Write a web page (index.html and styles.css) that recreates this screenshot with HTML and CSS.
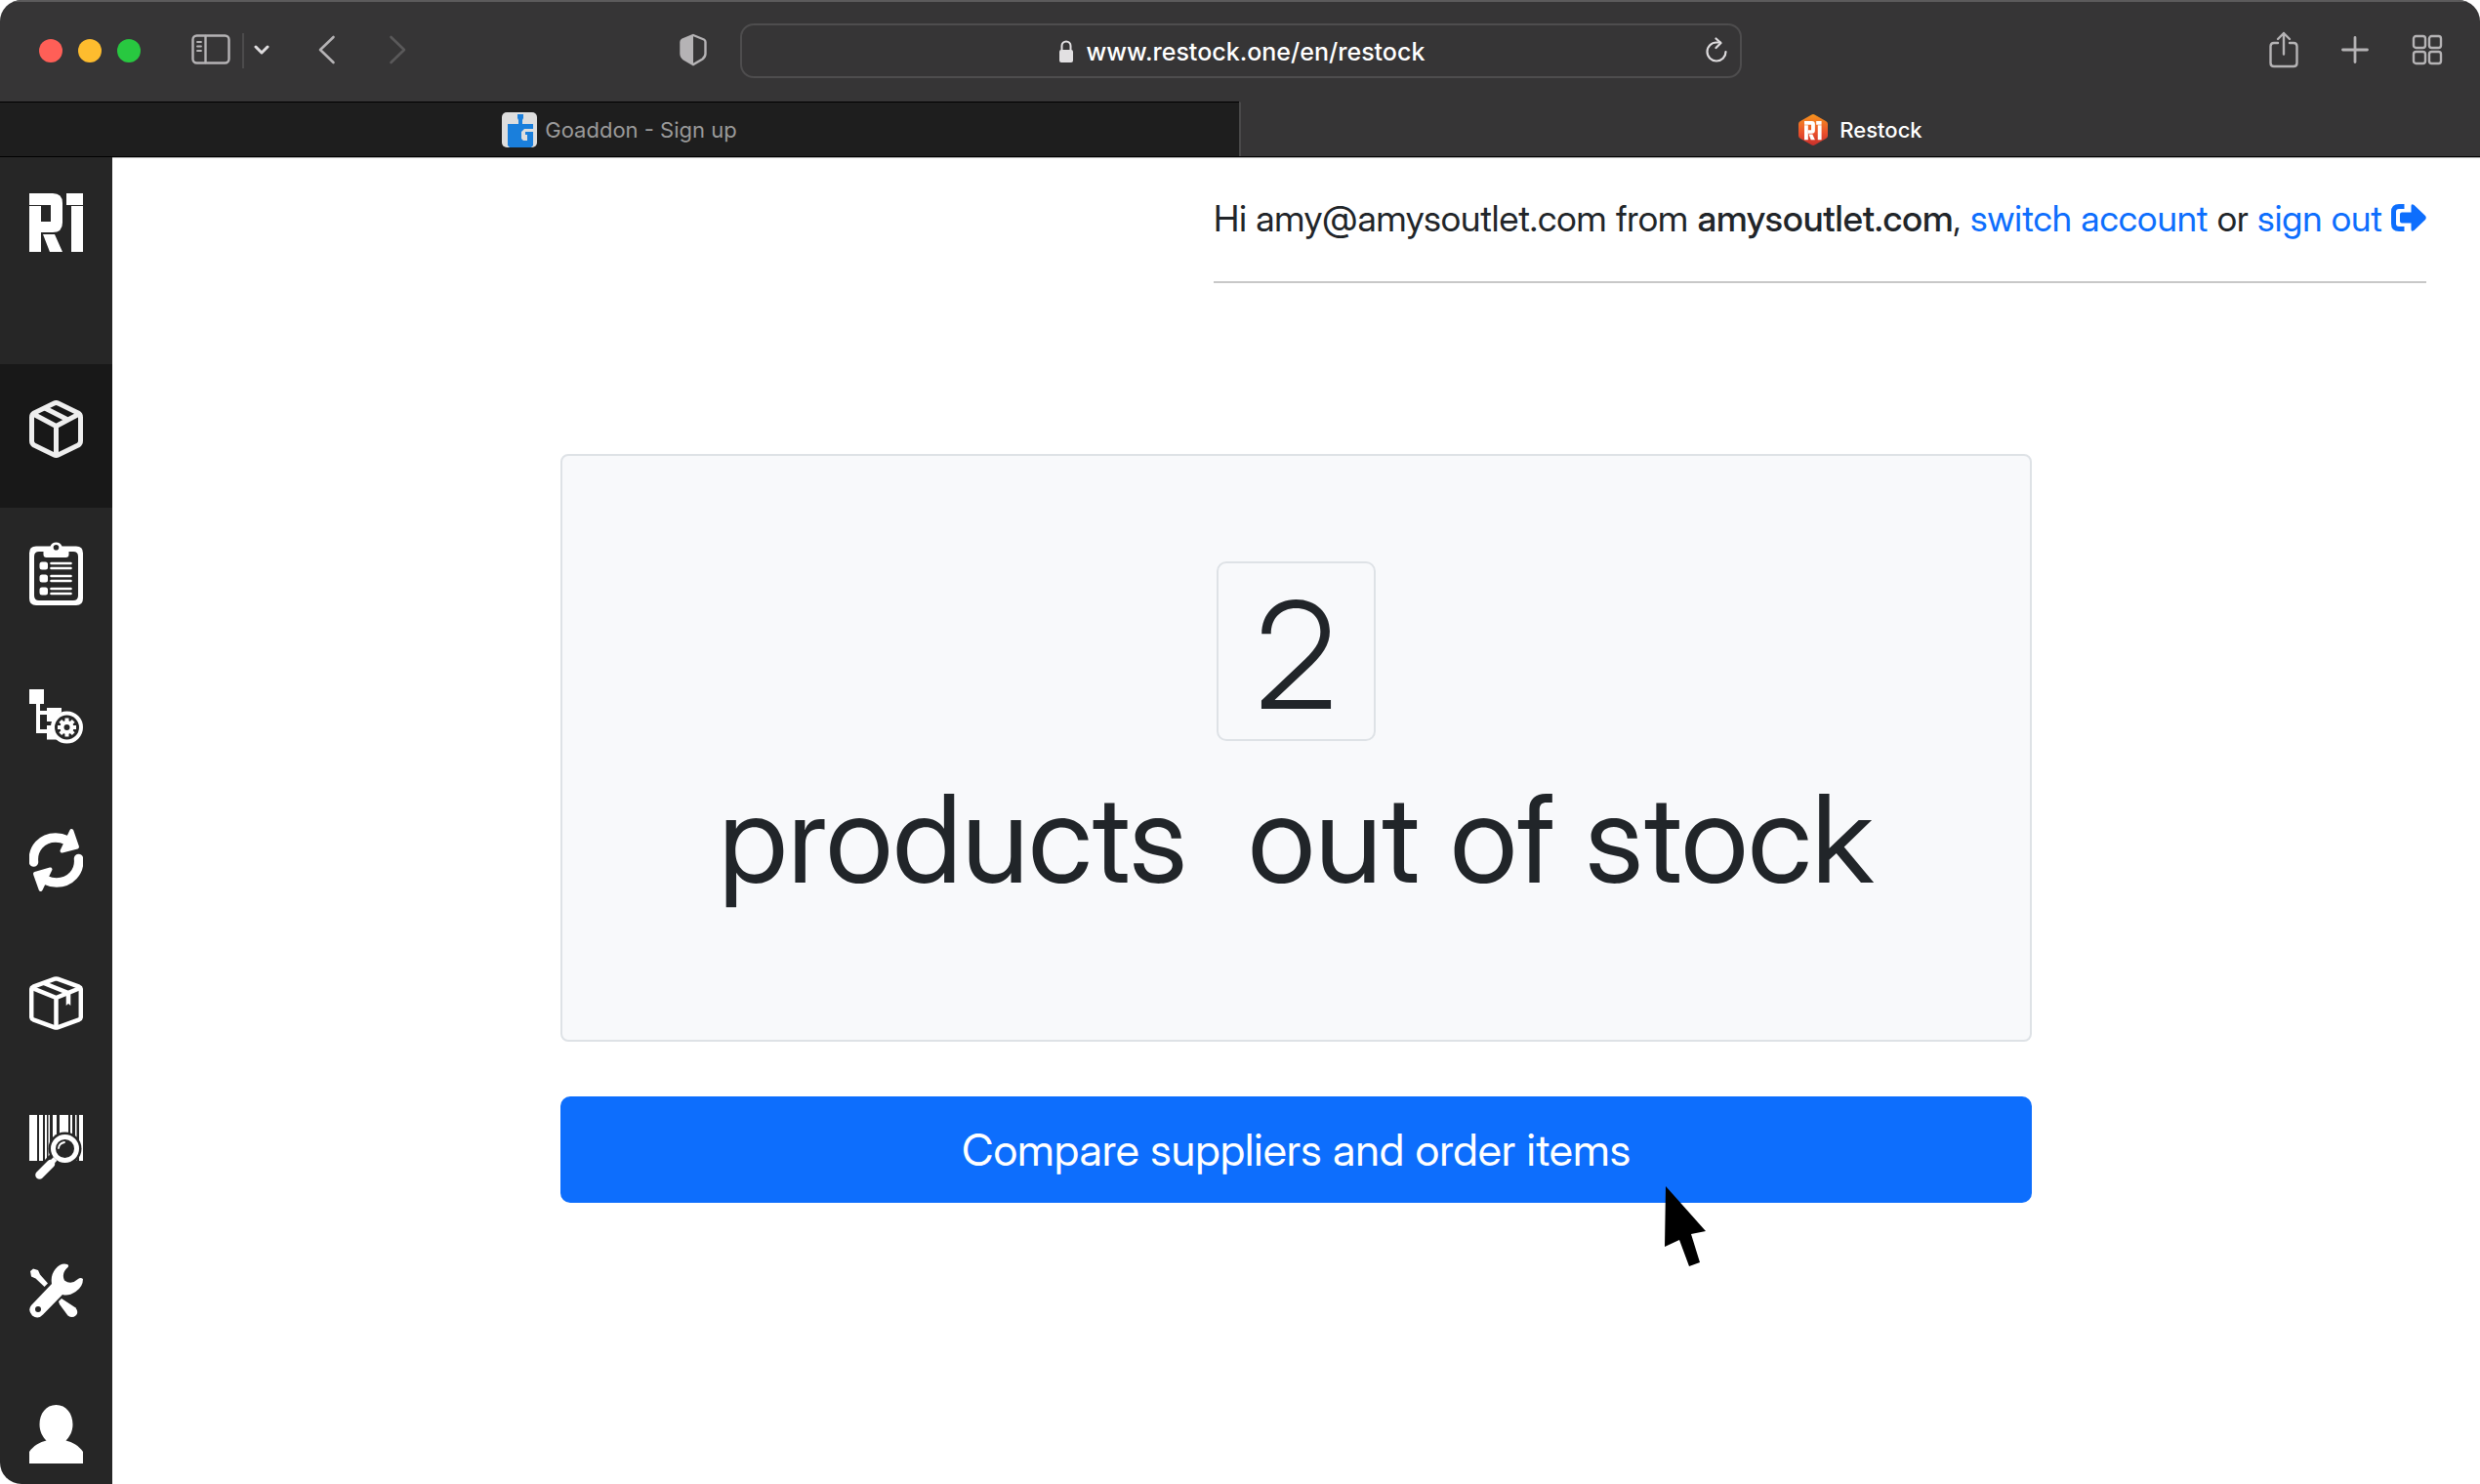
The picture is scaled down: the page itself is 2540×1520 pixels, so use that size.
FILE: index.html
```
<!DOCTYPE html>
<html lang="en">
<head>
    <meta charset="UTF-8">
    <meta name="viewport" content="width=device-width, initial-scale=1.0">
    <title>Restock</title>
    <link rel="stylesheet" href="styles.css">
</head>
<body>

    <div class="window">

        <!-- Browser toolbar -->
        <header class="toolbar">
            <div class="toolbar-side">
                <div class="lights">
                    <span class="light red"></span>
                    <span class="light yellow"></span>
                    <span class="light green"></span>
                </div>
                <button class="tool sidebar-toggle" aria-label="Show sidebar">
                    <svg width="40" height="32" viewBox="0 0 40 32" fill="none" stroke="#b5b3b5" stroke-width="2.4" stroke-linecap="round">
                        <rect x="1.5" y="1.5" width="37" height="28" rx="4"/>
                        <path d="M14.5 2v27"/>
                        <path d="M6 8h4M6 12.500h4M6 17h4" stroke-width="1.8"/>
                    </svg>
                </button>
                <span class="separator"></span>
                <button class="tool menu-toggle" aria-label="Tab groups">
                    <svg width="16" height="12" viewBox="0 0 16 12" fill="none" stroke="#dedcde" stroke-width="3" stroke-linecap="round" stroke-linejoin="round"><path d="M2 3l6 6 6-6"/></svg>
                </button>
                <button class="tool back" aria-label="Back">
                    <svg width="18" height="30" viewBox="0 0 18 30" fill="none" stroke="#b5b3b5" stroke-width="2.600" stroke-linecap="round" stroke-linejoin="round"><path d="M15.500 2L2 15l13.500 13"/></svg>
                </button>
                <button class="tool" aria-label="Forward" disabled>
                    <svg width="18" height="30" viewBox="0 0 18 30" fill="none" stroke="#5a595a" stroke-width="2.600" stroke-linecap="round" stroke-linejoin="round"><path d="M2.500 2L16 15 2.500 28"/></svg>
                </button>
                <button class="tool shield" aria-label="Privacy report">
                    <svg width="28" height="34" viewBox="0 0 28 34"><path d="M14 2L25 6.500Q26.500 7.200 26.500 9v12q0 3-3 5.500L14 32l-9.500-5.500q-3-2.500-3-5.500V9q0-1.800 1.500-2.500z" fill="none" stroke="#b5b3b5" stroke-width="2.400"/><path d="M14 2v30l-9.500-5.500q-3-2.500-3-5.500V9q0-1.800 1.500-2.500z" fill="#b5b3b5"/></svg>
                </button>
            </div>

            <div class="address">
                <a class="url" href="#">
                    <svg width="18" height="24" viewBox="0 0 18 24"><rect x="2" y="10" width="14" height="13" rx="2" fill="#e2e0e2"/><path d="M4.500 11V6a4.500 4.500 0 0 1 9 0v5" fill="none" stroke="#e2e0e2" stroke-width="2"/></svg>
                    www.restock.one/en/restock
                </a>
                <button class="tool reload" aria-label="Reload">
                    <svg width="24" height="26" viewBox="0 0 24 26" fill="none" stroke="#dddbdd" stroke-width="2.200" stroke-linecap="round" stroke-linejoin="round"><path d="M21.500 15A9.500 9.500 0 1 1 12 5.500h4"/><path d="M11.500 1.500L16.500 6 11.500 11"/></svg>
                </button>
            </div>

            <div class="toolbar-side right">
                <button class="tool" aria-label="Share">
                    <svg width="30" height="38" viewBox="0 0 30 38" fill="none" stroke="#b5b3b5" stroke-width="2.400" stroke-linecap="round" stroke-linejoin="round"><path d="M9 12H5q-3.500 0-3.500 3.500v17Q1.500 36 5 36h20q3.500 0 3.500-3.500v-17Q28.500 12 25 12h-4"/><path d="M15 23.500V2M9 8l6-6 6 6"/></svg>
                </button>
                <button class="tool" aria-label="New tab">
                    <svg width="28" height="28" viewBox="0 0 28 28" fill="none" stroke="#b5b3b5" stroke-width="2.800" stroke-linecap="round"><path d="M14 1.500v25M1.500 14h25"/></svg>
                </button>
                <button class="tool" aria-label="Tab overview">
                    <svg width="32" height="32" viewBox="0 0 32 32" fill="none" stroke="#b5b3b5" stroke-width="2.400"><rect x="2" y="2" width="12" height="12" rx="2.500"/><rect x="18" y="2" width="12" height="12" rx="2.500"/><rect x="2" y="18" width="12" height="12" rx="2.500"/><rect x="18" y="18" width="12" height="12" rx="2.500"/></svg>
                </button>
            </div>
        </header>

        <nav class="tabs">
            <a class="tab" href="#">
                <svg width="36" height="36" viewBox="0 0 36 36"><rect width="36" height="36" rx="5" fill="#dedede"/><path d="M16 2h6v4l-1 2v4h11v5h-9l-3 3v7l2 2h4v-6h-2v-3h8v14l-2 2H8l-2-2V12h11V8l-1-2z" fill="#1a7fdc"/></svg>
                Goaddon - Sign up
            </a>
            <a class="tab active" href="#">
                <svg width="30" height="32" viewBox="0 0 30 32">
                    <defs><linearGradient id="hex" x1="0" y1="0" x2="0" y2="1"><stop offset="0" stop-color="#f7941d"/><stop offset="0.600" stop-color="#ea4f2c"/><stop offset="1" stop-color="#c62f2b"/></linearGradient></defs>
                    <path d="M13 .7q2-1.200 4 0L28 7q2 1 2 3v12q0 2-2 3l-11 6.300q-2 1.200-4 0L2 25q-2-1-2-3V10q0-2 2-3z" fill="url(#hex)"/>
                    <g transform="translate(6 7) scale(0.320)" fill="#fff"><use href="#mark"/></g>
                </svg>
                Restock
            </a>
        </nav>

        <div class="page">

            <!-- Left menu -->
            <nav class="sidebar">
                <a class="brand" href="#" aria-label="Restock home">
                    <svg width="55" height="60" viewBox="0 0 55 60" fill="#fff">
                        <g id="mark">
                            <path d="M0 0h24q10 0 10 10v20q0 10-10 10H12V29h10V12H0z"/>
                            <path d="M0 13h12v47H0zM14 42h12l8 18H21z"/>
                            <path d="M38 0h17v12H38zM43 13h12v47H43z"/>
                        </g>
                    </svg>
                </a>
                <a class="item active" href="#" aria-label="Restock">
                    <svg width="55" height="59" viewBox="0 0 55 59" fill="none" stroke="#eee" stroke-width="5" stroke-linejoin="round">
                        <path d="M25 3.200q2.500-1.200 5 0L50 13q2.500 1.500 2.500 4.500v24q0 3-2.500 4.500L30 55.800q-2.500 1.200-5 0L5 46q-2.500-1.500-2.500-4.500v-24Q2.500 14.500 5 13z"/>
                        <path d="M4 14l23.500 12.500L51 14M27.500 27v29M16 8l23.500 12"/>
                    </svg>
                </a>
                <a class="item" href="#" aria-label="Orders">
                    <svg width="55" height="66" viewBox="0 0 55 66" fill="#fff">
                        <path fill-rule="evenodd" d="M7 5.500h14.500a6.500 6.500 0 0 1 12 0H48q7 0 7 7V59q0 7-7 7H7q-7 0-7-7V12.500q0-7 7-7zM14.500 11H10q-5 0-5 5v40q0 5 5 5h35q5 0 5-5V16q0-5-5-5h-4.500v3q0 3-3 3h-20q-3 0-3-3zM27.500 4a2.800 2.800 0 1 0 0 5.600 2.800 2.800 0 0 0 0-5.600z"/>
                        <rect x="10.500" y="21.500" width="8.500" height="8" rx="2.500"/><rect x="10.500" y="34.500" width="8.500" height="8" rx="2.500"/><rect x="10.500" y="47.500" width="8.500" height="8" rx="2.500"/>
                        <path d="M22.500 23h20M22.500 28h20M22.500 36h20M22.500 41h20M22.500 49h20M22.500 54h20" stroke="#fff" stroke-width="2.600" stroke-linecap="round"/>
                    </svg>
                </a>
                <a class="item" href="#" aria-label="Rules">
                    <svg width="55" height="56" viewBox="0 0 55 56" fill="#fff">
                        <path d="M0 0h15v15h-4v7h7v-3h15v4.500a17 17 0 0 0-8 9.500h-7v-7h-7v15h7v-4h6a17 17 0 0 0 7 14.500H18V45H7V15H0z"/>
                        <circle cx="38.500" cy="39" r="14.500" fill="#262626" stroke="#fff" stroke-width="4"/>
                        <circle cx="38.500" cy="39" r="5" fill="none" stroke="#fff" stroke-width="4"/>
                        <path d="M38.500 29.500v4M38.500 44.500v4M29 39h4M44 39h4M31.800 32.300l2.800 2.800M42.400 42.900l2.800 2.800M31.800 45.700l2.800-2.800M42.400 35.100l2.800-2.800" stroke="#fff" stroke-width="4"/>
                    </svg>
                </a>
                <a class="item" href="#" aria-label="Sync">
                    <svg width="55" height="66" viewBox="0 0 55 66" fill="none" stroke="#fff" stroke-linecap="round" stroke-linejoin="round">
                        <path d="M4.500 35C3 21 13 10 27 10q6 0 11 2.500M50.500 31.500C52 45 42 56 28 56q-6 0-11-2.500" stroke-width="9.500"/>
                        <path d="M43.300 3l5.700 16.500-15.500 4zM11.700 63L6 47l15.500-4.500z" fill="#fff" stroke-width="4"/>
                    </svg>
                </a>
                <a class="item" href="#" aria-label="Products">
                    <svg width="55" height="55" viewBox="0 0 55 55" fill="none" stroke="#fff" stroke-width="4.500" stroke-linejoin="round">
                        <path d="M26 2.700q1.500-.5 3 0l22 8q1.800.8 1.800 2.800v28q0 2-1.800 2.800l-22 8q-1.500.5-3 0l-22-8Q2.200 43.500 2.200 41.500v-28q0-2 1.800-2.800z"/>
                        <path d="M3 12l24.500 10L52 12M27.500 22v30M15 7l25 10"/>
                        <path d="M37.700 17.500h4.600V30l-2.300-2-2.300 2z" fill="#fff" stroke="none"/>
                    </svg>
                </a>
                <a class="item" href="#" aria-label="Barcode search">
                    <svg width="55" height="66" viewBox="0 0 55 66" fill="#fff">
                        <path d="M0 0h8v47H0zM10 0h4v47h-4zM16 0h2v47h-2zM19.500 0h1.500v47h-1.500zM24 0h4v47h-4zM31 0h9v47h-9zM42 0h2v47h-2zM47 0h1.500v47H47zM51 0h4v47h-4z"/>
                        <circle cx="36.500" cy="34.500" r="17" fill="#262626"/>
                        <path d="M25 45L10.500 61" stroke="#262626" stroke-width="12"/>
                        <circle cx="36.500" cy="34.500" r="12" fill="none" stroke="#fff" stroke-width="5"/>
                        <path d="M30 34q.5-5 6-6" fill="none" stroke="#fff" stroke-width="1.800" stroke-linecap="round"/>
                        <path d="M22 50L10.500 61.500" stroke="#fff" stroke-width="8.500" stroke-linecap="round"/>
                        <path d="M26.500 45L21 51" stroke="#fff" stroke-width="5"/>
                    </svg>
                </a>
                <a class="item" href="#" aria-label="Tools">
                    <svg width="55" height="56" viewBox="0 0 55 56" fill="#fff">
                        <path d="M1 8l3-2.500 5 1.500 2 4.500 8 9-3.500 3.500-9-8.500-4.500-2z"/>
                        <path d="M33 36l14.500 9.500q3.500 5 0 8t-8 0L31 42l-1-3z"/>
                        <path fill-rule="evenodd" d="M39 1q2 1 .5 3-7 6-3.500 13.500 7 5 14-1.500 2.500-2 5 0 0 8-7.500 13T34 32L14 52.500q-5 5.500-11 1-5-5.500-1-10.500L23 21q-1.500-9 4-15.500T39 1zM9 44a3 3 0 1 0 0 6 3 3 0 0 0 0-6z"/>
                    </svg>
                </a>
                <a class="item" href="#" aria-label="Account">
                    <svg width="55" height="60" viewBox="0 0 55 60" fill="#fff"><path d="M27.500 0C38 0 44.500 9 44.500 20c0 7-3 12.500-7 16.500C44 38 51 42 55 48v12H0V48c4-6 11-10 17.500-11.500-4-4-7-9.500-7-16.500C10.500 9 17 0 27.500 0z"/></svg>
                </a>
            </nav>

            <!-- Main content -->
            <main class="content">
                <div class="account">
                    Hi amy@amysoutlet.com from <strong>amysoutlet.com</strong>,
                    <a href="#">switch account</a> or
                    <a href="#">sign out <svg class="exit" width="36" height="28" viewBox="0 0 36 28"><path d="M13.500 2.500H8Q2.500 2.500 2.500 8v12q0 5.500 5.500 5.500h5.500" fill="none" stroke="#0d6efd" stroke-width="5"/><path d="M11 8.500h9.500V2q0-3 3-1L35 12q1.500 2 0 4L23.500 27q-3 2-3-1v-6.500H11q-2 0-2-2v-7q0-2 2-2z" fill="#0d6efd"/></svg></a>
                </div>

                <section class="stock">
                    <div class="card">
                        <span class="count">2</span>
                        <p class="label">products&nbsp; out of stock</p>
                    </div>
                    <button class="compare">
                        Compare suppliers and order items
                        <svg class="pointer" width="44" height="84" viewBox="0 0 44 84"><path d="M2 1L43 47l-15 3 9 29-11 4-10-27L1 63z"/></svg>
                    </button>
                </section>
            </main>
        </div>
    </div>

</body>
</html>
```

FILE: styles.css
```
* {
    box-sizing: border-box;
}

body {
    margin: 0;
    background-color: #fff;
    color: #212529;
    font-family: Inter, "Liberation Sans", sans-serif;
}

svg {
    display: block;
    flex: none;
}

a {
    color: #0d6efd;
    text-decoration: none;
}

.window {
    display: flex;
    flex-direction: column;
    min-height: 100vh;
    border-radius: 22px;
    overflow: hidden;
}

/* Toolbar */
.toolbar {
    display: flex;
    align-items: center;
    height: 104px;
    padding: 0 38px 2px 40px;
    background-color: #363536;
    border-top: 2px solid #5c5b5c;
}

.toolbar-side {
    display: flex;
    align-items: center;
    flex: 1;
}

.toolbar-side.right {
    justify-content: flex-end;
    gap: 44px;
}

.tool {
    padding: 0 0 2px;
    border: none;
    background: none;
    cursor: pointer;
}

.lights {
    display: flex;
    gap: 16px;
}

.light {
    width: 24px;
    height: 24px;
    border-radius: 50%;
}

.red {
    background-color: #ff5f57;
}

.yellow {
    background-color: #febc2e;
}

.green {
    background-color: #28c840;
}

.sidebar-toggle {
    margin-left: 52px;
}

.separator {
    width: 2px;
    height: 36px;
    margin: 0 10px 0 12px;
    background-color: #4c4b4c;
}

.back {
    margin: 0 54px 0 50px;
}

.shield {
    margin: 0 34px 0 auto;
}

.address {
    display: flex;
    align-items: center;
    width: 1026px;
    height: 56px;
    padding: 0 12px;
    border: 2px solid #4e4d4e;
    border-radius: 14px;
}

.url {
    display: flex;
    align-items: center;
    justify-content: center;
    flex: 1;
    gap: 12px;
    padding: 2px 0 0 24px;
    color: #fff;
    font-size: 25px;
    font-weight: 500;
}

/* Tabs */
.tabs {
    display: flex;
    height: 57px;
    border-bottom: 1px solid #000;
}

.tab {
    display: flex;
    align-items: center;
    justify-content: center;
    flex: 1;
    gap: 8px;
    background-color: #1e1e1e;
    border-top: 1px solid #000;
    color: #9a9a9a;
    font-size: 22px;
}

.tab.active {
    gap: 12px;
    background-color: #363536;
    border-top-color: #363536;
    border-left: 2px solid #4a494a;
    color: #fff;
    font-weight: 500;
}

.page {
    display: flex;
    flex: 1;
}

/* Sidebar */
.sidebar {
    width: 115px;
    background-color: #262626;
}

.brand {
    display: flex;
    justify-content: center;
    height: 212px;
    padding-top: 37px;
}

.item {
    display: flex;
    align-items: center;
    justify-content: center;
    height: 147px;
    padding-bottom: 14px;
}

.item:last-child {
    height: auto;
    padding: 37px 0 20px;
}

.item.active {
    background-color: #181818;
}

/* Content */
.content {
    display: flex;
    flex-direction: column;
    flex: 1;
    padding: 0 55px;
    border-top: 1px solid #b8b8b8;
    font-family: "Inter Display", Inter, "Liberation Sans", sans-serif;
}

.account {
    align-self: flex-end;
    padding: 35px 0 37px;
    border-bottom: 2px solid #c8c8c8;
    font-size: 37px;
    line-height: 54px;
}

.account strong {
    font-weight: 500;
}

.exit {
    display: inline-block;
}

.stock {
    align-self: center;
    width: calc(100% * 2 / 3 - 36px);
    margin-top: 175px;
}

.card {
    display: flex;
    flex-direction: column;
    align-items: center;
    padding: 108px 24px;
    background-color: #f8f9fb;
    border: 2px solid #dee2e6;
    border-radius: 8px;
}

.count {
    padding: 8px 37px 0;
    border: 2px solid #dee2e6;
    border-radius: 10px;
    font-size: 152px;
    font-weight: 300;
    line-height: 172px;
}

.label {
    margin: 24px 0 22px;
    font-size: 125px;
    line-height: 152px;
}

.compare {
    position: relative;
    width: 100%;
    margin-top: 56px;
    padding: 0;
    border: none;
    border-radius: 10px;
    background-color: #0d6efd;
    color: #fff;
    font-family: inherit;
    font-size: 45px;
    line-height: 109px;
    cursor: pointer;
}

.pointer {
    position: absolute;
    top: 91px;
    left: 75%;
}
```
